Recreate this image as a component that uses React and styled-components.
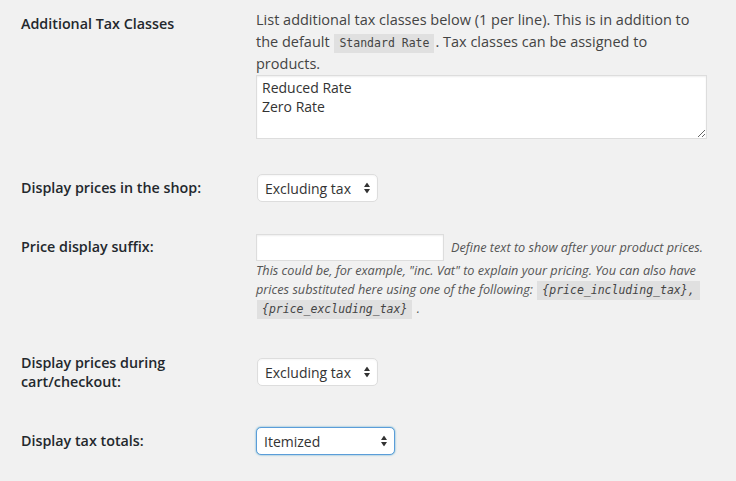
import React from "react";
import styled, { createGlobalStyle } from "styled-components";

const Global = createGlobalStyle`
  html, body { margin: 0; padding: 0; background: #f1f1f1; }
  body { font-family: "Open Sans", "Liberation Sans", sans-serif; color: #444; }
  * { box-sizing: border-box; }
`;

const Page = styled.div`
  padding-left: 21px;
  width: 736px;
  height: 481px;
  overflow: hidden;
`;

const Row = styled.div`
  display: grid;
  grid-template-columns: 235px 1fr;
  align-items: ${(p) => (p.$center ? "center" : "start")};
  margin-top: ${(p) => p.$gap}px;
`;

const Label = styled.div`
  font-size: 14.3px;
  font-weight: 600;
  color: #23282d;
  line-height: ${(p) => p.$lh || 20}px;
  margin-top: ${(p) => p.$offset || 0}px;
`;

const Field = styled.div`
  padding-top: ${(p) => p.$offset || 0}px;
  display: flex;
  flex-direction: column;
  align-items: flex-start;
`;

const Description = styled.p`
  margin: 0;
  font-size: 14.5px;
  line-height: 22px;
  color: #444;
`;

const Code = styled.code`
  font-family: "DejaVu Sans Mono", "Liberation Mono", monospace;
  font-size: 11.5px;
  line-height: 1;
  background: rgba(0, 0, 0, 0.065);
  padding: 2px 5px 3px;
  margin: 0 1px;
  color: #444;
  font-style: ${(p) => (p.$italic ? "italic" : "normal")};
`;

const TextArea = styled.textarea`
  width: 451px;
  height: 64px;
  margin: 0;
  padding: 2px 5px;
  border: 1px solid #ddd;
  background: #fff;
  box-shadow: inset 0 1px 2px rgba(0, 0, 0, 0.07);
  font-family: "Open Sans", "Liberation Sans", sans-serif;
  font-size: 14px;
  line-height: 19px;
  color: #333;
  outline: none;
`;

const SelectWrap = styled.div`
  position: relative;
  display: inline-flex;
  width: ${(p) => p.$width}px;
  margin-left: ${(p) => p.$shift || 0}px;
`;

const Select = styled.select`
  appearance: none;
  -webkit-appearance: none;
  width: 100%;
  height: 28px;
  margin: 0;
  padding: 0 22px 0 7px;
  border: 1px solid ${(p) => (p.$focused ? "#5b9dd9" : "#ddd")};
  border-radius: 5px;
  background: #fff;
  box-shadow: ${(p) =>
    p.$focused
      ? "0 0 2px rgba(30, 140, 190, 0.8)"
      : "inset 0 1px 2px rgba(0, 0, 0, 0.04)"};
  font-family: "Open Sans", "Liberation Sans", sans-serif;
  font-size: 14px;
  color: #333;
  outline: none;
`;

const Arrow = styled.svg`
  position: absolute;
  right: 8px;
  top: 50%;
  transform: translateY(-50%);
  pointer-events: none;
`;

const InputLine = styled.div`
  display: flex;
  align-items: center;
  gap: 7px;
`;

const TextInput = styled.input`
  width: 188px;
  height: 27px;
  margin: 0;
  padding: 3px 5px;
  border: 1px solid #ddd;
  background: #fff;
  box-shadow: inset 0 1px 2px rgba(0, 0, 0, 0.07);
  font-family: "Open Sans", "Liberation Sans", sans-serif;
  font-size: 14px;
  outline: none;
`;

const Hint = styled.span`
  font-size: 12.7px;
  font-style: italic;
  color: #555;
  line-height: 19px;
`;

const HintBlock = styled.p`
  margin: 0;
  font-size: 12.7px;
  font-style: italic;
  color: #555;
  line-height: 19px;
`;

function SelectBox({ width, value, focused, shift }) {
  return (
    <SelectWrap $width={width} $shift={shift}>
      <Select $focused={focused} defaultValue={value}>
        <option>{value}</option>
      </Select>
      <Arrow width="6" height="11" viewBox="0 0 6 11">
        <polygon points="0,4.5 3,0 6,4.5" fill="#333" />
        <polygon points="0,6.5 6,6.5 3,11" fill="#333" />
      </Arrow>
    </SelectWrap>
  );
}

export default function App() {
  return (
    <Page>
      <Global />
      <Row $gap={0}>
        <Label $offset={14}>Additional Tax Classes</Label>
        <Field $offset={9}>
          <Description>
            List additional tax classes below (1 per line). This is in addition to
            <br />
            the default <Code>Standard Rate</Code>. Tax classes can be assigned to
            <br />
            products.
          </Description>
          <TextArea defaultValue={"Reduced Rate\nZero Rate"} />
        </Field>
      </Row>

      <Row $gap={35} $center>
        <Label>Display prices in the shop:</Label>
        <Field>
          <SelectBox width={121} value="Excluding tax" shift={1} />
        </Field>
      </Row>

      <Row $gap={32}>
        <Label $offset={3}>Price display suffix:</Label>
        <Field>
          <InputLine>
            <TextInput type="text" />
            <Hint>Define text to show after your product prices.</Hint>
          </InputLine>
          <HintBlock>
            This could be, for example, "inc. Vat" to explain your pricing. You can also have
            <br />
            prices substituted here using one of the following:{" "}
            <Code $italic>{"{price_including_tax},"}</Code>
            <br />
            <Code $italic>{"{price_excluding_tax}"}</Code> .
          </HintBlock>
        </Field>
      </Row>

      <Row $gap={35} $center>
        <Label $lh={19}>
          Display prices during
          <br />
          cart/checkout:
        </Label>
        <Field>
          <SelectBox width={121} value="Excluding tax" shift={1} />
        </Field>
      </Row>

      <Row $gap={36} $center>
        <Label>Display tax totals:</Label>
        <Field>
          <SelectBox width={139} value="Itemized" focused />
        </Field>
      </Row>
    </Page>
  );
}
